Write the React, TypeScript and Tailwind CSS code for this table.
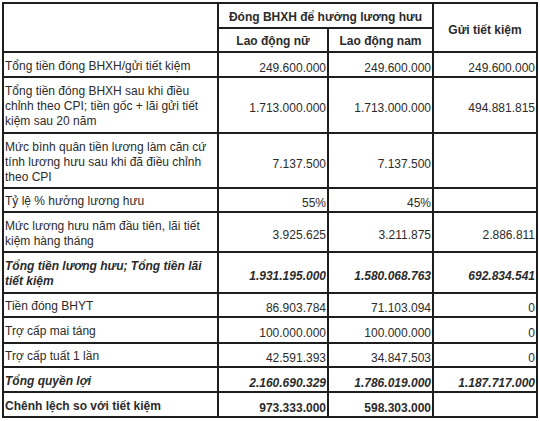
import React from "react";

type Row = {
  label: React.ReactNode;
  a: string;
  b: string;
  c: string;
  h: number;
  style?: "bi" | "b";
};

const rows: Row[] = [
  { label: "Tổng tiền đóng BHXH/gửi tiết kiệm", a: "249.600.000", b: "249.600.000", c: "249.600.000", h: 25 },
  {
    label: (
      <>
        Tổng tiền đóng BHXH sau khi điều
        <br />
        chỉnh theo CPI; tiền gốc + lãi gửi tiết
        <br />
        kiệm sau 20 năm
      </>
    ),
    a: "1.713.000.000",
    b: "1.713.000.000",
    c: "494.881.815",
    h: 56,
  },
  {
    label: (
      <>
        Mức bình quân tiền lương làm căn cứ
        <br />
        tính lương hưu sau khi đã điều chỉnh
        <br />
        theo CPI
      </>
    ),
    a: "7.137.500",
    b: "7.137.500",
    c: "",
    h: 55,
  },
  { label: "Tỷ lệ % hưởng lương hưu", a: "55%", b: "45%", c: "", h: 24 },
  {
    label: (
      <>
        Mức lương hưu năm đầu tiên, lãi tiết
        <br />
        kiệm hàng tháng
      </>
    ),
    a: "3.925.625",
    b: "3.211.875",
    c: "2.886.811",
    h: 40,
  },
  {
    label: (
      <>
        Tổng tiền lương hưu; Tổng tiền lãi
        <br />
        tiết kiệm
      </>
    ),
    a: "1.931.195.000",
    b: "1.580.068.763",
    c: "692.834.541",
    h: 41,
    style: "bi",
  },
  { label: "Tiền đóng BHYT", a: "86.903.784", b: "71.103.094", c: "0", h: 24 },
  { label: "Trợ cấp mai táng", a: "100.000.000", b: "100.000.000", c: "0", h: 26 },
  { label: "Trợ cấp tuất 1 lần", a: "42.591.393", b: "34.847.503", c: "0", h: 24 },
  { label: "Tổng quyền lợi", a: "2.160.690.329", b: "1.786.019.000", c: "1.187.717.000", h: 25, style: "bi" },
  { label: "Chênh lệch so với tiết kiệm", a: "973.333.000", b: "598.303.000", c: "", h: 25, style: "b" },
];

export default function App() {
  return (
    <div
      className="w-[540px] h-[421px] bg-white overflow-hidden pt-[2px] pl-[2px] text-[#2b2b2b]"
      style={{ fontFamily: '"Liberation Sans", Arial, sans-serif' }}
    >
      <table className="table-fixed border-collapse w-[534px] text-[12px] leading-[15px]">
        <colgroup>
          <col className="w-[215px]" />
          <col className="w-[110px]" />
          <col className="w-[105px]" />
          <col className="w-[104px]" />
        </colgroup>
        <tbody>
          <tr className="h-[25px]">
            <td rowSpan={2} className="border-2 border-[#1e1e1e]"></td>
            <td colSpan={2} className="border-2 border-[#1e1e1e] text-center font-bold align-middle pt-[4px] p-0">
              Đóng BHXH để hưởng lương hưu
            </td>
            <td rowSpan={2} className="border-2 border-[#1e1e1e] text-center font-bold align-middle pt-[6px] p-0">
              Gửi tiết kiệm
            </td>
          </tr>
          <tr className="h-[24px]">
            <td className="border-2 border-[#1e1e1e] text-center font-bold align-middle pt-[3px] p-0">Lao động nữ</td>
            <td className="border-2 border-[#1e1e1e] text-center font-bold align-middle pt-[3px] p-0">Lao động nam</td>
          </tr>
          {rows.map((r, i) => {
            const f = r.style === "bi" ? "font-bold italic" : r.style === "b" ? "font-bold" : "";
            return (
              <tr key={i} style={{ height: r.h }}>
                <td className={`border-2 border-[#1e1e1e] align-middle pl-[1px] pr-0 pt-[3px] pb-0 ${f}`}>{r.label}</td>
                <td className={`border-2 border-[#1e1e1e] align-middle text-right pr-[1px] pl-0 pt-[7px] pb-0 ${f}`}>{r.a}</td>
                <td className={`border-2 border-[#1e1e1e] align-middle text-right pr-[1px] pl-0 pt-[7px] pb-0 ${f}`}>{r.b}</td>
                <td className={`border-2 border-[#1e1e1e] align-middle text-right pr-[1px] pl-0 pt-[7px] pb-0 ${f}`}>{r.c}</td>
              </tr>
            );
          })}
        </tbody>
      </table>
    </div>
  );
}
